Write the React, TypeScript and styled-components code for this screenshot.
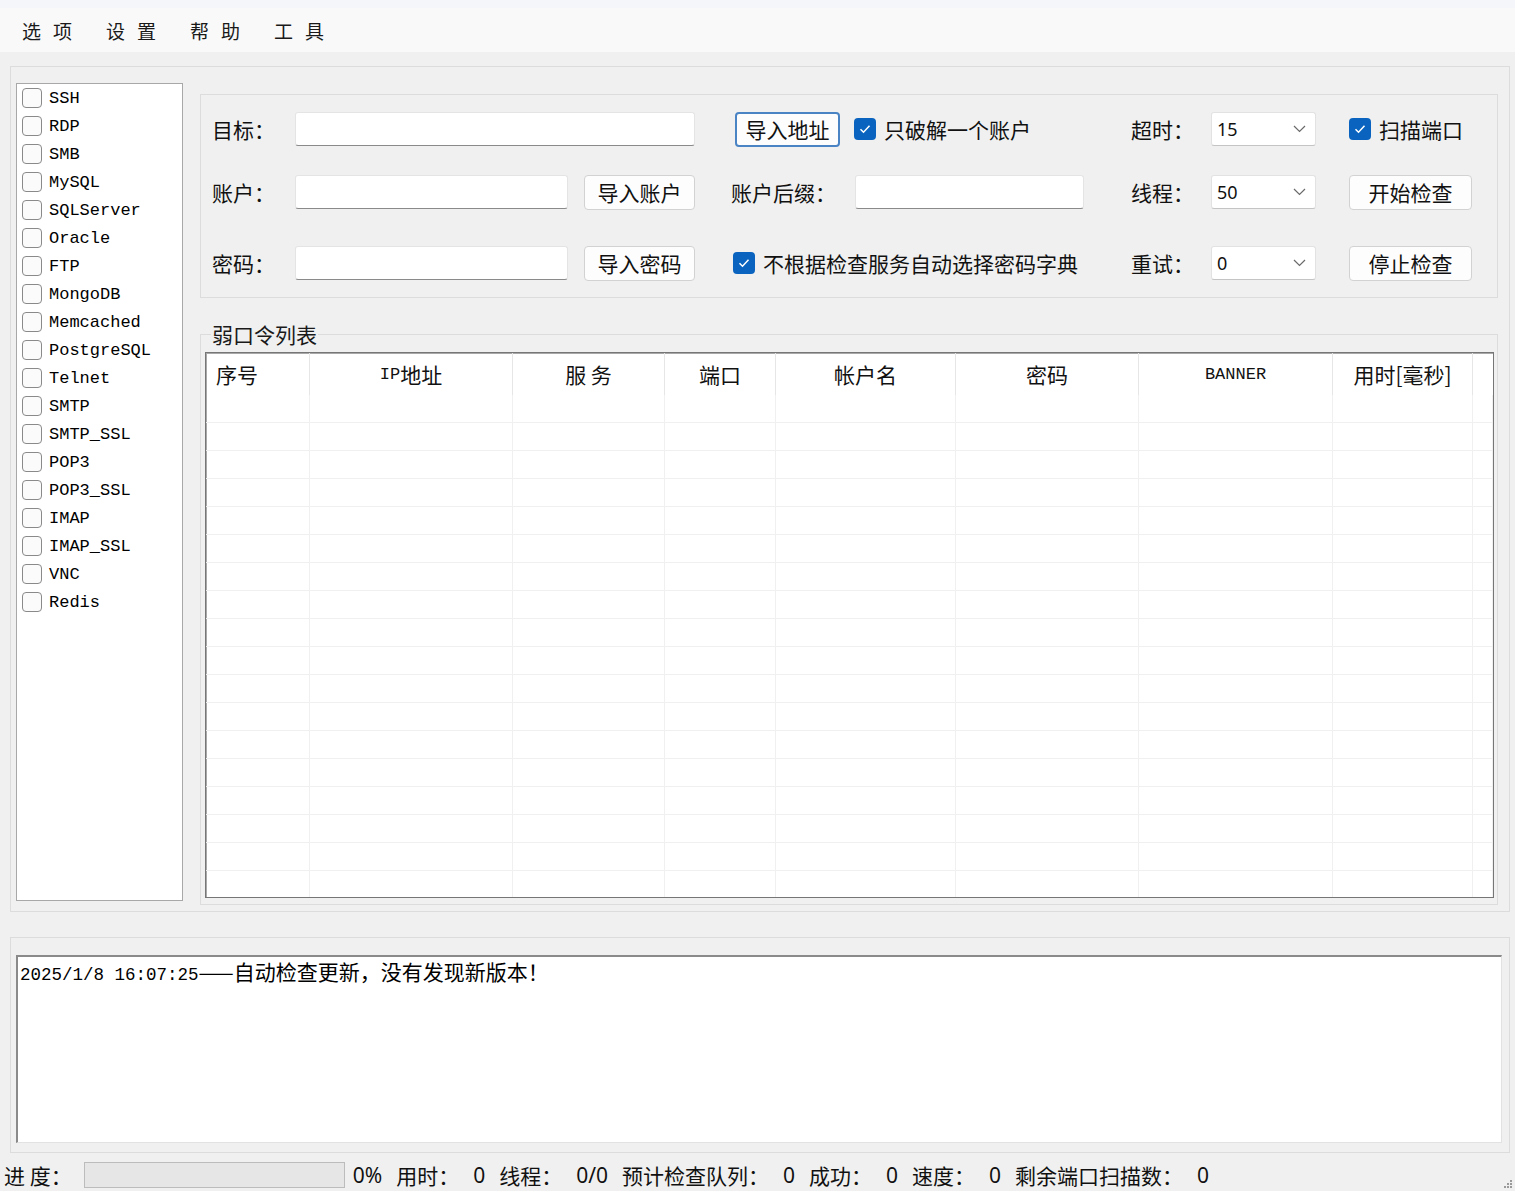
import React from "react"
import styled, { createGlobalStyle } from "styled-components"

const cjk = `"Noto Sans CJK SC", sans-serif`
const ui = `"Noto Sans", "Noto Sans CJK SC", sans-serif`
const mono = `"Liberation Mono", "Noto Sans CJK SC", monospace`

const GlobalStyle = createGlobalStyle`
  html, body {
    margin: 0;
    padding: 0;
    background: #f0f0f0;
  }
  body {
    font-family: ${cjk};
    color: #111;
  }
  * { box-sizing: border-box; }
`

const Window = styled.div`
  width: 1515px;
  height: 1191px;
  display: flex;
  flex-direction: column;
  background: #f0f0f0;
  overflow: hidden;
`

const MenuBar = styled.div`
  height: 52px;
  padding: 6px 0 0 22px;
  display: flex;
  gap: 22px;
  background: #f9f9f9;
  border-top: 8px solid #f4f6f9;
`

const MenuItem = styled.span`
  font-size: 19px;
  letter-spacing: 12px;
  line-height: 34px;
  color: #1a1a1a;
`

const MainGroup = styled.div`
  margin: 14px 5px 0 10px;
  height: 846px;
  border: 1px solid #dcdcdc;
  padding: 16px 11px 0 5px;
  display: flex;
  gap: 17px;
`

const ServiceList = styled.div`
  width: 167px;
  height: 818px;
  background: #fff;
  border: 1px solid #a8a8a8;
  display: flex;
  flex-direction: column;
`

const ServiceRow = styled.label`
  height: 28px;
  display: flex;
  align-items: center;
  gap: 7px;
  padding-left: 5px;
  font-family: ${mono};
  font-size: 17px;
  color: #000;
`

const EmptyBox = styled.span`
  width: 20px;
  height: 20px;
  border: 1.5px solid #8a8a8a;
  border-radius: 4px;
  background: #fbfbfb;
`

const RightColumn = styled.div`
  flex: 1;
  display: flex;
  flex-direction: column;
  min-width: 0;
`

const FormGroup = styled.div`
  margin-top: 11px;
  height: 204px;
  border: 1px solid #dcdcdc;
  padding: 16px 0 0 11px;
  display: grid;
  grid-template-columns: 83px 273px 16px 111px 36px 400px 80px 105px 33px 123px;
  grid-template-rows: 36px 27px 36px 35px 36px;
`

const Cell = styled.div<{ $col: string; $row: number }>`
  grid-column: ${(p) => p.$col};
  grid-row: ${(p) => p.$row};
  display: flex;
  align-items: center;
  min-width: 0;
`

const Label = styled.span`
  font-size: 21px;
  line-height: 28px;
  color: #111;
  white-space: nowrap;
`

const TextInput = styled.div<{ $w?: number }>`
  width: ${(p) => (p.$w ? `${p.$w}px` : "100%")};
  height: 34px;
  background: #fff;
  border: 1px solid #e4e4e4;
  border-bottom: 1.5px solid #8a8a8a;
  border-radius: 3px;
`

const Button = styled.button<{ $focus?: boolean; $w?: number }>`
  width: ${(p) => (p.$w ? `${p.$w}px` : "100%")};
  height: 35px;
  padding: 0;
  background: #fdfdfd;
  border: ${(p) => (p.$focus ? "2px solid #4a84c4" : "1px solid #d2d2d2")};
  border-radius: 4px;
  font-family: ${cjk};
  font-size: 21px;
  line-height: 28px;
  color: #111;
`

const CheckWrap = styled.label<{ $ml?: number }>`
  display: flex;
  align-items: center;
  gap: 8px;
  margin-left: ${(p) => p.$ml ?? 0}px;
`

const CheckedBox = styled.span`
  width: 22px;
  height: 22px;
  border-radius: 4px;
  background: #0a64bf;
  display: flex;
  align-items: center;
  justify-content: center;
`

const Select = styled.div`
  width: 105px;
  height: 34px;
  background: #fff;
  border: 1px solid #e2e2e2;
  border-bottom-color: #c4c4c4;
  border-radius: 3px;
  display: flex;
  align-items: center;
  justify-content: space-between;
  padding: 0 9px 0 5px;
  font-family: ${ui};
  font-size: 18px;
  color: #111;
`

const ListGroup = styled.fieldset`
  margin: 23px 0 0;
  padding: 0 3px 6px 4px;
  border: 1px solid #dcdcdc;
  min-width: 0;
`

const Legend = styled.legend`
  margin-left: 6px;
  padding: 0 1px;
  font-size: 21px;
  line-height: 26px;
  color: #1a1a1a;
`

const Table = styled.div`
  margin-top: 5px;
  height: 546px;
  background: #fff;
  border: 1px solid #767676;
  box-shadow: inset 1px 1px 0 #a8a8a8;
  display: grid;
  grid-template-columns: 104px 203px 152px 111px 180px 183px 194px 140px 1fr;
  grid-template-rows: 42px;
  grid-auto-rows: 28px;
  overflow: hidden;
`

const HeadCell = styled.div<{ $left?: boolean }>`
  display: flex;
  align-items: center;
  justify-content: ${(p) => (p.$left ? "flex-start" : "center")};
  padding-left: ${(p) => (p.$left ? "10px" : "0")};
  border-right: 1px solid #e6e6e6;
  font-size: 21px;
  color: #111;
  white-space: nowrap;
`

const Latin = styled.span`
  font-family: ${mono};
  font-size: 17px;
`

const BodyCell = styled.div`
  border-right: 1px solid #f0f0f0;
  border-bottom: 1px solid #f0f0f0;
`

const LogGroup = styled.div`
  margin: 25px 5px 0 10px;
  height: 216px;
  border: 1px solid #dcdcdc;
  padding: 17px 7px 9px 5px;
  display: flex;
`

const LogBox = styled.div`
  flex: 1;
  background: #fff;
  border-top: 2px solid #8a8a8a;
  border-left: 2px solid #8a8a8a;
  border-right: 1px solid #e2e2e2;
  border-bottom: 1px solid #e2e2e2;
  padding: 0 2px;
  font-size: 21px;
  line-height: 28px;
  color: #000;
`

const StatusBar = styled.div`
  height: 38px;
  padding: 6px 3px 0 4px;
  display: flex;
  align-items: center;
  font-family: ${ui};
  font-size: 21px;
  color: #111;
  white-space: nowrap;
`

const Progress = styled.div`
  width: 261px;
  height: 26px;
  margin: 0 8px 0 12px;
  background: #e6e6e6;
  border: 1px solid #bcbcbc;
`

const StatValue = styled.span`
  margin: 0 14px;
`

const Grip = styled.svg`
  margin-left: auto;
  align-self: flex-end;
  margin-bottom: 3px;
`

const services = [
  "SSH", "RDP", "SMB", "MySQL", "SQLServer", "Oracle", "FTP", "MongoDB",
  "Memcached", "PostgreSQL", "Telnet", "SMTP", "SMTP_SSL", "POP3",
  "POP3_SSL", "IMAP", "IMAP_SSL", "VNC", "Redis",
]

const stats = [
  ["用时", "0"],
  ["线程", "0/0"],
  ["预计检查队列", "0"],
  ["成功", "0"],
  ["速度", "0"],
  ["剩余端口扫描数", "0"],
]

const Check = () => (
  <CheckedBox>
    <svg width="14" height="14" viewBox="0 0 14 14">
      <path d="M2.5 7.2l3 3 6-6.4" fill="none" stroke="#fff" strokeWidth="1.5" />
    </svg>
  </CheckedBox>
)

const Chevron = () => (
  <svg width="13" height="8" viewBox="0 0 13 8">
    <path d="M1 1l5.5 5.5L12 1" fill="none" stroke="#6a6a6a" strokeWidth="1.2" />
  </svg>
)

const App: React.FC = () => {
  const bodyRows = Array.from({ length: 18 })
  return (
    <Window>
      <GlobalStyle />
      <MenuBar>
        <MenuItem>选项</MenuItem>
        <MenuItem>设置</MenuItem>
        <MenuItem>帮助</MenuItem>
        <MenuItem>工具</MenuItem>
      </MenuBar>

      <MainGroup>
        <ServiceList>
          {services.map((s) => (
            <ServiceRow key={s}>
              <EmptyBox />
              {s}
            </ServiceRow>
          ))}
        </ServiceList>

        <RightColumn>
          <FormGroup>
            {/* row 1 */}
            <Cell $col="1" $row={1}><Label>目标：</Label></Cell>
            <Cell $col="2 / 5" $row={1}><TextInput /></Cell>
            <Cell $col="6" $row={1}>
              <Button $focus $w={105} style={{ marginLeft: 4 }}>导入地址</Button>
              <CheckWrap $ml={14}>
                <Check />
                <Label>只破解一个账户</Label>
              </CheckWrap>
            </Cell>
            <Cell $col="7" $row={1}><Label>超时：</Label></Cell>
            <Cell $col="8" $row={1}><Select>15<Chevron /></Select></Cell>
            <Cell $col="10" $row={1}>
              <CheckWrap>
                <Check />
                <Label>扫描端口</Label>
              </CheckWrap>
            </Cell>

            {/* row 2 */}
            <Cell $col="1" $row={3}><Label>账户：</Label></Cell>
            <Cell $col="2" $row={3}><TextInput /></Cell>
            <Cell $col="4" $row={3}><Button>导入账户</Button></Cell>
            <Cell $col="6" $row={3}>
              <Label style={{ width: 124 }}>账户后缀：</Label>
              <TextInput $w={229} />
            </Cell>
            <Cell $col="7" $row={3}><Label>线程：</Label></Cell>
            <Cell $col="8" $row={3}><Select>50<Chevron /></Select></Cell>
            <Cell $col="10" $row={3}><Button>开始检查</Button></Cell>

            {/* row 3 */}
            <Cell $col="1" $row={5}><Label>密码：</Label></Cell>
            <Cell $col="2" $row={5}><TextInput /></Cell>
            <Cell $col="4" $row={5}><Button>导入密码</Button></Cell>
            <Cell $col="6" $row={5}>
              <CheckWrap $ml={2}>
                <Check />
                <Label>不根据检查服务自动选择密码字典</Label>
              </CheckWrap>
            </Cell>
            <Cell $col="7" $row={5}><Label>重试：</Label></Cell>
            <Cell $col="8" $row={5}><Select>0<Chevron /></Select></Cell>
            <Cell $col="10" $row={5}><Button>停止检查</Button></Cell>
          </FormGroup>

          <ListGroup>
            <Legend>弱口令列表</Legend>
            <Table>
              <HeadCell $left>序号</HeadCell>
              <HeadCell><Latin>IP</Latin>地址</HeadCell>
              <HeadCell>服&nbsp;务</HeadCell>
              <HeadCell>端口</HeadCell>
              <HeadCell>帐户名</HeadCell>
              <HeadCell>密码</HeadCell>
              <HeadCell><Latin>BANNER</Latin></HeadCell>
              <HeadCell>用时[毫秒]</HeadCell>
              <HeadCell style={{ borderRight: "none" }} />
              {bodyRows.map((_, r) =>
                Array.from({ length: 9 }).map((__, c) => <BodyCell key={`${r}-${c}`} />)
              )}
            </Table>
          </ListGroup>
        </RightColumn>
      </MainGroup>

      <LogGroup>
        <LogBox>
          <Latin style={{ fontSize: 17.5 }}>2025/1/8 16:07:25</Latin>——自动检查更新，没有发现新版本！
        </LogBox>
      </LogGroup>

      <StatusBar>
        <span style={{ fontFamily: cjk }}>进 度：</span>
        <Progress />
        <span>0%</span>
        <StatValue style={{ marginRight: 0 }} />
        {stats.map(([label, value]) => (
          <React.Fragment key={label}>
            <span>{label}：</span>
            <StatValue>{value}</StatValue>
          </React.Fragment>
        ))}
        <Grip width="10" height="10" viewBox="0 0 10 10">
          <rect x="8" y="2" width="2" height="2" fill="#9a9a9a" />
          <rect x="5" y="5" width="2" height="2" fill="#9a9a9a" />
          <rect x="8" y="5" width="2" height="2" fill="#9a9a9a" />
          <rect x="2" y="8" width="2" height="2" fill="#9a9a9a" />
          <rect x="5" y="8" width="2" height="2" fill="#9a9a9a" />
          <rect x="8" y="8" width="2" height="2" fill="#9a9a9a" />
        </Grip>
      </StatusBar>
    </Window>
  )
}

export default App
